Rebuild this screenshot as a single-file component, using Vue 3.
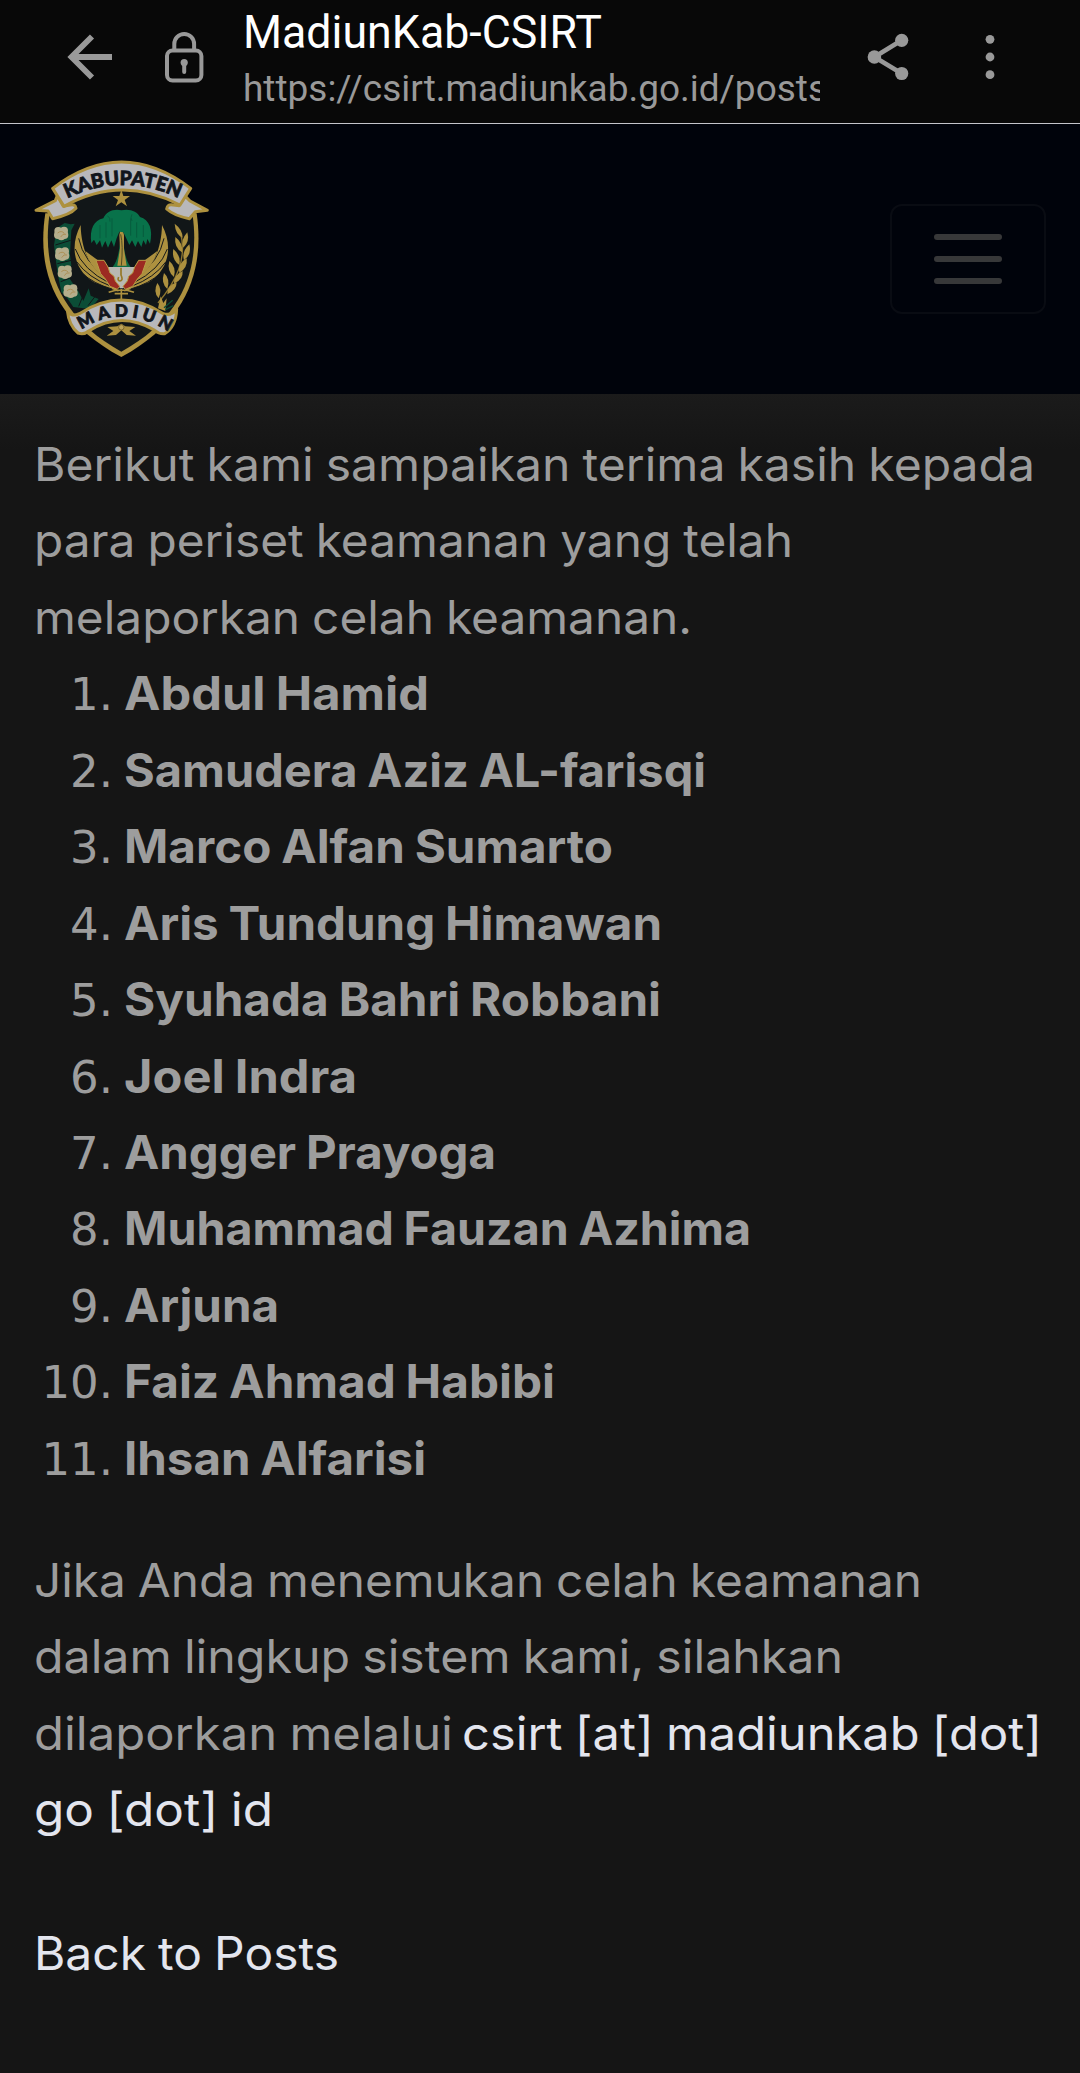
<script setup>
const intro = [
  { text: 'Berikut kami sampaikan terima kasih kepada', w: 1001 },
  { text: 'para periset keamanan yang telah', w: 759 },
  { text: 'melaporkan celah keamanan.', w: 658 },
]

const names = [
  { text: 'Abdul Hamid', w: 305 },
  { text: 'Samudera Aziz AL-farisqi', w: 582 },
  { text: 'Marco Alfan Sumarto', w: 489 },
  { text: 'Aris Tundung Himawan', w: 538 },
  { text: 'Syuhada Bahri Robbani', w: 537 },
  { text: 'Joel Indra', w: 233 },
  { text: 'Angger Prayoga', w: 372 },
  { text: 'Muhammad Fauzan Azhima', w: 627 },
  { text: 'Arjuna', w: 155 },
  { text: 'Faiz Ahmad Habibi', w: 431 },
  { text: 'Ihsan Alfarisi', w: 302 },
]

const report = [
  [{ text: 'Jika Anda menemukan celah keamanan', w: 888 }],
  [{ text: 'dalam lingkup sistem kami, silahkan', w: 809 }],
  [
    { text: 'dilaporkan melalui', w: 419 },
    { text: 'csirt [at] madiunkab [dot]', w: 580, link: true },
  ],
  [{ text: 'go [dot] id', w: 239, link: true }],
]

// Widens a single line of text to a given width.
const vFit = {
  mounted(el, { value }) {
    const natural = el.getBoundingClientRect().width
    el.style.width = `${value}px`
    el.style.transform = `scaleX(${value / natural})`
  },
}
</script>

<template>
  <div class="screen">
    <header class="browser">
      <svg class="back" width="46" height="46" viewBox="0 0 46 46">
        <path d="M45 23H5M25 2.5L4.5 23 25 43.5" fill="none" stroke="#999" stroke-width="5.8" />
      </svg>
      <svg class="lock" width="40" height="52" viewBox="0 0 40 52">
        <g fill="none" stroke="#999" stroke-width="4">
          <rect x="3" y="19.5" width="34.4" height="30" rx="5.5" />
          <path d="M10.3 19V13a9.9 10 0 0 1 19.8 0v6" />
        </g>
        <circle cx="20.2" cy="31.6" r="3.6" fill="#999" />
        <path d="M20.2 32v9" stroke="#999" stroke-width="4" stroke-linecap="round" />
      </svg>
      <div class="titles">
        <div class="title"><span v-fit="359">MadiunKab-CSIRT</span></div>
        <div class="url"><span v-fit="584">https://csirt.madiunkab.go.id/posts</span></div>
      </div>
      <svg class="share" width="44" height="50" viewBox="0 0 44 50">
        <path d="M35.7 8.3L8.4 25l27.3 16.5" fill="none" stroke="#999" stroke-width="4.6" />
        <g fill="#999">
          <circle cx="35.7" cy="8.3" r="6.6" />
          <circle cx="8.4" cy="25" r="6.8" />
          <circle cx="35.7" cy="41.5" r="6.6" />
        </g>
      </svg>
      <svg class="more" width="12" height="46" viewBox="0 0 12 46" fill="#999">
        <circle cx="6" cy="5.3" r="4.4" />
        <circle cx="6" cy="23" r="4.4" />
        <circle cx="6" cy="40.7" r="4.4" />
      </svg>
    </header>

    <nav class="nav">
      <svg class="logo" width="200" height="220" viewBox="0 0 600 660">
        <defs>
          <path id="arc-top" d="M142 160Q302 82 468 156" />
          <path id="arc-bottom" d="M184 554Q306 474 440 557" />
          <g id="wing">
            <path d="M182 240C150 300 158 372 222 412L296 440 272 408C220 380 184 330 182 240Z" fill="#ad913f" />
            <path d="M176 280Q190 350 262 398M166 312Q188 374 268 414M170 350Q204 398 274 424M186 384Q220 416 276 432" fill="none" stroke="#15191a" stroke-width="3" />
            <path d="M196 318Q220 336 240 350L270 402 238 386Q206 356 196 318Z" fill="#ad913f" />
            <path d="M228 346L252 346 264 366 270 384 282 394 286 408 299 424 292 433 270 424 256 402 242 386Z" fill="#9c2a22" stroke="#b99d47" stroke-width="3" />
          </g>
        </defs>
        <path d="M76 205L530 205C552 360 514 522 304 636C90 522 52 360 76 205Z" fill="#ad913f" />
        <path d="M88 212Q300 60 518 212C538 356 500 512 304 620C108 512 68 356 88 212Z" fill="#111618" />

        <path d="M134 234L152 238 164 236 154 256 150 330 154 360 148 400 176 440 190 468 206 430 212 452 236 462 210 492 160 486 142 460 124 442 112 380 102 300 110 250Z" fill="#0b4d36" />
        <g stroke="#111618" stroke-width="3" fill="none">
          <path d="M106 300l46-14M112 356l42-10M122 410l32-12M176 484l14-34M204 482l20-26" />
        </g>
        <g fill="#b5ae8c">
          <g v-for="(f, i) in [[124, 264], [127, 326], [135, 380], [152, 437]]" :key="i" :transform="`translate(${f[0]} ${f[1]})`">
            <circle cx="-9" cy="-6" r="12" />
            <circle cx="8" cy="-7" r="12" />
            <circle cx="-10" cy="6" r="12" />
            <circle cx="9" cy="6" r="12" />
            <circle cy="10" r="12" />
            <path d="M-11 0Q0-9 9 1M-2 12Q4 0 14 4" fill="none" stroke="#a9894a" stroke-width="2.5" />
          </g>
        </g>

        <path d="M250 366H356L310 430H300Z" fill="#b8b8b2" />
        <path d="M304 240C300 300 298 340 278 366H332C312 340 312 300 304 240Z" fill="#0c6b43" />
        <path d="M304 238L298 270 300 310 292 362H320L312 312 312 270Z" fill="#ad913f" />
        <path d="M302 268Q310 300 304 362" fill="none" stroke="#4e4b22" stroke-width="3" />
        <path d="M214 294C208 252 222 226 250 220C258 200 282 190 304 196C330 190 352 200 360 216C388 224 400 254 390 296L382 282 378 300 370 286 364 306 354 288 346 306 336 286 328 300 318 278 310 262 298 260 290 280 282 306 274 286 264 308 256 288 246 308 240 286 230 300 222 284Z" fill="#08724a" />
        <path d="M240 240v40M258 232v46M276 220v54M332 220v52M350 232v46M370 240v36M262 212q10 6 8 18M336 208q-6 10 0 20" fill="none" stroke="#075c3e" stroke-width="3" />
        <path d="M304 134L310 153 330 153 314 165 321 184 304 172 287 184 294 165 278 153 298 153Z" fill="#ad913f" />

        <use href="#wing" />
        <use href="#wing" transform="translate(608 0) scale(-1 1)" />
        <path d="M303 368v22q8 16-3 18-9-2-4-12" fill="none" stroke="#967827" stroke-width="5" />
        <path d="M266 442Q304 428 342 442M304 432v34M284 446h40" fill="none" stroke="#ad913f" stroke-width="5" />

        <path d="M480 258C504 340 468 410 414 474" fill="none" stroke="#8f762e" stroke-width="4" />
        <g fill="#ad913f">
          <path d="M464 236q24 18 24 42q-22-10-24-42Z" />
          <path d="M502 262q8 28-12 46q-10-22 12-46Z" />
          <path d="M466 276q24 18 20 46q-24-14-20-46Z" />
          <path d="M508 298q8 30-16 48q-8-26 16-48Z" />
          <path d="M460 312q24 20 18 48q-24-16-18-48Z" />
          <path d="M500 340q4 28-22 44q-6-28 22-44Z" />
          <path d="M448 348q22 18 14 48q-22-18-14-48Z" />
          <path d="M488 378q2 26-26 38q-2-26 26-38Z" />
          <path d="M432 384q20 18 10 48q-20-18-10-48Z" />
          <path d="M470 412q0 24-28 36q-2-26 28-36Z" />
          <path d="M412 414q16 18 4 46q-18-18-4-46Z" />
          <path d="M414 490l8-36 8 20 10-14-4 38Z" />
        </g>
        <path d="M432 488l26-22M436 494l24-12" stroke="#0b4d36" stroke-width="4" />

        <path d="M260 572l20-14-18-12 30-2 12-8 12 8 30 2-18 12 20 14-28-2-16-14-16 14Z" fill="#ad913f" />
        <circle cx="304" cy="547" r="8" fill="#bda45a" stroke="#5d4c1e" stroke-width="2" />

        <g fill="#b8b8bb" stroke="#ad913f" stroke-width="9" stroke-linejoin="round">
          <path d="M112 152L106 167 48 196 84 198 98 221Q150 210 168 190Q166 176 150 180L130 184Z" />
          <path d="M494 152L510 168 562 196 526 200 508 221Q462 212 440 192Q442 176 460 180L478 182Z" />
          <path d="M98 130Q304-28 512 130L480 180Q304 88 132 184Z" />
          <path d="M142 496Q152 518 178 506Q304 424 430 506Q454 514 470 492Q468 546 434 566Q418 568 404 556Q304 496 206 558Q192 570 174 564Q146 540 142 496Z" />
        </g>
        <g class="ribbon">
          <text font-size="59"><textPath href="#arc-top" textLength="346" lengthAdjust="spacingAndGlyphs">KABUPATEN</textPath></text>
          <text font-size="51"><textPath href="#arc-bottom" textLength="278">MADIUN</textPath></text>
        </g>
      </svg>
      <button class="toggler" aria-label="Menu">
        <i></i><i></i><i></i>
      </button>
    </nav>

    <main class="content">
      <p>
        <span v-for="l in intro" :key="l.text" class="line"><span v-fit="l.w">{{ l.text }}</span></span>
      </p>
      <ol class="names">
        <li v-for="(n, i) in names" :key="n.text">
          <span class="num">{{ i + 1 }}.</span>
          <b v-fit="n.w">{{ n.text }}</b>
        </li>
      </ol>
      <p class="report">
        <span v-for="(line, i) in report" :key="i" class="line">
          <span v-for="s in line" :key="s.text" v-fit="s.w" :class="{ link: s.link }">{{ s.text }}</span>
        </span>
      </p>
      <a class="line link back-link"><span v-fit="305">Back to Posts</span></a>
    </main>
  </div>
</template>

<style>
body {
  margin: 0;
  background: #151515;
}
</style>

<style scoped>
.screen {
  width: 1080px;
  height: 2073px;
  overflow: hidden;
  background: #151515;
  font-family: Inter, sans-serif;
}
.browser {
  box-sizing: border-box;
  height: 124px;
  display: flex;
  align-items: flex-start;
  background: #080808;
  border-bottom: 1px solid #c4c5cb;
  font-family: Roboto, sans-serif;
  white-space: nowrap;
}
.browser svg {
  flex: none;
}
.back {
  margin: 34px 0 0 67px;
}
.lock {
  margin: 31px 0 0 51px;
}
.titles {
  width: 577px;
  margin-left: 39px;
  overflow: hidden;
}
.title {
  height: 60px;
  line-height: 66px;
  font-size: 45.5px;
  color: #fff;
}
.url {
  height: 60px;
  line-height: 57px;
  font-size: 37.5px;
  color: #999;
}
.titles span {
  display: inline-block;
  transform-origin: 0 50%;
}
.share {
  margin: 32px 0 0 46px;
}
.more {
  margin: 34px 0 0 74px;
}
.nav {
  box-sizing: border-box;
  height: 270px;
  padding: 0 34px 0 20px;
  display: flex;
  align-items: center;
  justify-content: space-between;
  background: #00030b;
}
.logo {
  margin-top: -8px;
}
.ribbon {
  font-family: Lato, sans-serif;
  font-weight: 900;
  fill: #11151b;
  stroke: #11151b;
  stroke-width: 2.5px;
}
.toggler {
  box-sizing: border-box;
  width: 156px;
  height: 110px;
  padding: 0;
  display: flex;
  flex-direction: column;
  align-items: center;
  justify-content: center;
  gap: 16.5px;
  background: transparent;
  border: 2px solid #090c13;
  border-radius: 12px;
}
.toggler i {
  width: 68px;
  height: 5.8px;
  border-radius: 3px;
  background: #373839;
}
.content {
  padding: 32px 0 0 34px;
  font-size: 46px;
  line-height: 76.45px;
  color: #9d9d9d;
  white-space: nowrap;
  word-spacing: -0.03em;
  background: linear-gradient(#1b1b1b, #151515 56px);
}
.line > span,
b {
  flex: none;
  transform-origin: 0 50%;
}
p,
ol {
  margin: 0;
  padding: 0;
  list-style: none;
}
.line {
  display: flex;
  justify-content: flex-start;
  gap: 9px;
  height: 76.45px;
}
.names li {
  display: flex;
  align-items: baseline;
  height: 76.45px;
}
.num {
  width: 79px;
  margin-right: 11px;
  text-align: right;
  font-family: "DejaVu Sans", sans-serif;
  font-size: 45px;
}
b {
  font-weight: 700;
}
.report {
  margin-top: 45.7px;
}
.link {
  color: #e3e5ee;
}
.back-link {
  margin-top: 67.2px;
}
</style>
